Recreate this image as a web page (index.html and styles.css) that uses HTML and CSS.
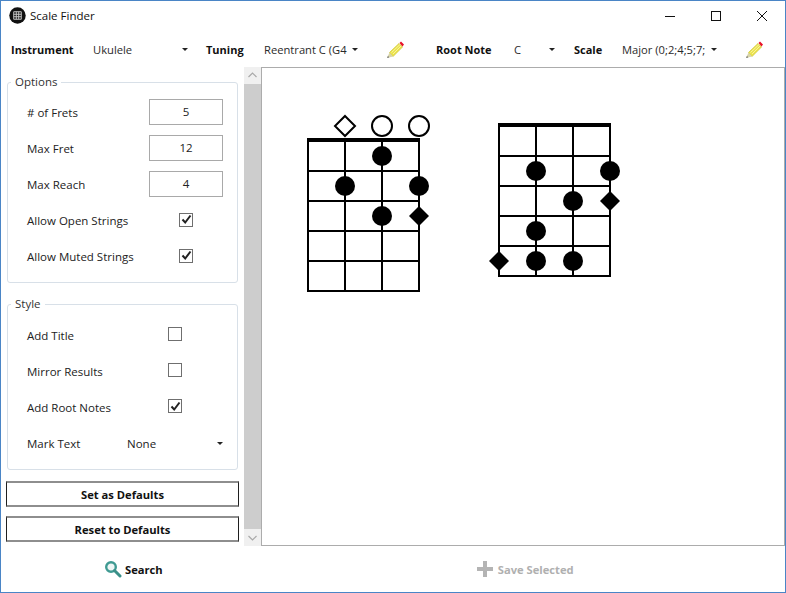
FILE: index.html
```html
<!DOCTYPE html>
<html>
<head>
<meta charset="utf-8">
<title>Scale Finder</title>
<link rel="stylesheet" href="styles.css">
</head>
<body>
<div class="window">
  <header class="titlebar">
    <svg class="appicon" width="17" height="17" viewBox="0 0 18 18">
      <circle cx="9" cy="9" r="8.700" fill="#111"/>
      <path d="M5 5h8v8H5zM5 7.700h8M5 10.300h8M7.700 5v8M10.300 5v8" fill="none" stroke="#ccc" stroke-width="1"/>
    </svg>
    <span class="apptitle">Scale Finder</span>
    <div class="winbtns">
      <svg class="winbtn" width="46" height="30" viewBox="0 0 46 30"><path d="M18 15.500h10" stroke="#111"/></svg>
      <svg class="winbtn" width="46" height="30" viewBox="0 0 46 30"><rect x="18.500" y="10.500" width="9" height="9" fill="none" stroke="#111"/></svg>
      <svg class="winbtn" width="46" height="30" viewBox="0 0 46 30"><path d="M18 10l10 10M28 10L18 20" stroke="#111" fill="none"/></svg>
    </div>
  </header>
  <div class="toolbar">
    <b class="tlabel l-inst">Instrument</b>
    <div class="combo c-inst"><span class="val">Ukulele</span><i class="caret"></i></div>
    <b class="tlabel l-tun">Tuning</b>
    <div class="combo c-tun"><span class="val">Reentrant C (G4</span><i class="caret"></i></div>
    <svg class="pencil p1" width="20" height="20" viewBox="0 0 20 20"><use href="#pencil"/></svg>
    <b class="tlabel l-root">Root Note</b>
    <div class="combo c-root"><span class="val">C</span><i class="caret"></i></div>
    <b class="tlabel l-scale">Scale</b>
    <div class="combo c-scale"><span class="val">Major (0;2;4;5;7;</span><i class="caret"></i></div>
    <svg class="pencil p2" width="20" height="20" viewBox="0 0 20 20"><use href="#pencil"/></svg>
  </div>
  <main class="main">
    <aside class="side">
      <fieldset class="group g-options">
        <legend>Options</legend>
        <div class="row"><span># of Frets</span><div class="num">5</div></div>
        <div class="row"><span>Max Fret</span><div class="num">12</div></div>
        <div class="row"><span>Max Reach</span><div class="num">4</div></div>
        <div class="row"><span>Allow Open Strings</span><div class="check on"><svg width="11" height="11" viewBox="0 0 11 11"><path d="M1.500 5.500l2.700 3L9.500 1.500" fill="none" stroke="#222" stroke-width="2"/></svg></div></div>
        <div class="row"><span>Allow Muted Strings</span><div class="check on"><svg width="11" height="11" viewBox="0 0 11 11"><path d="M1.500 5.500l2.700 3L9.500 1.500" fill="none" stroke="#222" stroke-width="2"/></svg></div></div>
      </fieldset>
      <fieldset class="group g-style">
        <legend>Style</legend>
        <div class="row"><span>Add Title</span><div class="check"></div></div>
        <div class="row"><span>Mirror Results</span><div class="check"></div></div>
        <div class="row"><span>Add Root Notes</span><div class="check on"><svg width="11" height="11" viewBox="0 0 11 11"><path d="M1.500 5.500l2.700 3L9.500 1.500" fill="none" stroke="#222" stroke-width="2"/></svg></div></div>
        <div class="row"><span class="mt">Mark Text</span><span class="mv">None</span><i class="caret"></i></div>
      </fieldset>
      <button class="btn b1">Set as Defaults</button>
      <button class="btn b2">Reset to Defaults</button>
    </aside>
    <div class="scrollbar">
      <svg class="arrow" width="17" height="17" viewBox="0 0 17 17"><path d="M4.500 10l4-4 4 4" fill="none" stroke="#a8a8a8" stroke-width="1.200"/></svg>
      <div class="thumb"></div>
      <svg class="arrow" width="17" height="17" viewBox="0 0 17 17"><path d="M4.500 7l4 4 4-4" fill="none" stroke="#a8a8a8" stroke-width="1.200"/></svg>
    </div>
    <section class="canvas">
      <svg class="diagrams" width="523" height="477" viewBox="262 68 523 477">
        <g fill="none" stroke="#000" stroke-width="2">
          <path d="M308 140V292M345 140V292M382 140V292M419 140V292M307 171H420M307 201H420M307 231H420M307 261H420M307 291H420"/>
          <path d="M307 140H420" stroke-width="4"/>
          <path d="M499 125V277M536 125V277M573 125V277M610 125V277M498 156H611M498 186H611M498 216H611M498 246H611M498 276H611"/>
          <path d="M498 125H611" stroke-width="4"/>
          <path d="M345 116l10 10-10 10-10-10z"/>
          <circle cx="382" cy="126" r="10"/>
          <circle cx="419" cy="126" r="10"/>
        </g>
        <g fill="#000">
          <circle cx="382" cy="156" r="10"/>
          <circle cx="345" cy="186" r="10"/>
          <circle cx="419" cy="186" r="10"/>
          <circle cx="382" cy="216" r="10"/>
          <path d="M419 206l10 10-10 10-10-10z"/>
          <circle cx="536" cy="171" r="10"/>
          <circle cx="610" cy="171" r="10"/>
          <circle cx="573" cy="201" r="10"/>
          <path d="M610 191l10 10-10 10-10-10z"/>
          <circle cx="536" cy="231" r="10"/>
          <circle cx="536" cy="261" r="10"/>
          <circle cx="573" cy="261" r="10"/>
          <path d="M499 251l10 10-10 10-10-10z"/>
        </g>
      </svg>
    </section>
  </main>
  <footer class="footer">
    <div class="action a-search">
      <svg width="18" height="18" viewBox="0 0 18 18"><circle cx="7" cy="7" r="4.800" fill="#eef6f5" stroke="#3f9a92" stroke-width="2.400"/><path d="M10.500 10.500l5.500 5.500" stroke="#3a8f88" stroke-width="3" stroke-linecap="round"/></svg>
      <b>Search</b>
    </div>
    <div class="action a-save">
      <svg width="16" height="16" viewBox="0 0 16 16"><path d="M6 0h4v6h6v4h-6v6H6v-6H0V6h6z" fill="#b4b4b4"/></svg>
      <b>Save Selected</b>
    </div>
  </footer>
</div>
<svg class="defs" width="0" height="0">
  <defs>
    <symbol id="pencil" viewBox="0 0 20 20">
      <path d="M4.500 12.500L14 3.500l3.500 3.500-9.500 9.500z" fill="#ece34a" stroke="#cfc83a" stroke-width=".8"/>
      <path d="M6.500 12.500l8.500-8M8 14l8-8" stroke="#f7f2a0" stroke-width="1"/>
      <path d="M14.500 3l1.500-1.500 3 3-1.500 2z" fill="#e8132a"/>
      <path d="M4.500 12.500L2 18l6-1.500z" fill="#d9d5a8"/>
      <path d="M3 15.800L2 18l2.300-.6z" fill="#777"/>
    </symbol>
  </defs>
</svg>
</body>
</html>
```
FILE: styles.css
```css
* { box-sizing: border-box; }
html, body { margin: 0; padding: 0; }
body {
  width: 786px;
  height: 593px;
  overflow: hidden;
  background: #fff;
  font-family: "Open Sans", "Noto Sans", sans-serif;
  font-size: 11.500px;
  color: #222;
}
.defs { position: absolute; }
.window {
  width: 786px;
  height: 593px;
  border: 1px solid #4a85c6;
  display: flex;
  flex-direction: column;
}
.titlebar {
  height: 30px;
  display: flex;
  align-items: center;
  padding-left: 8px;
  flex: none;
}
.appicon { margin-top: -2px; }
.apptitle { margin-left: 4px; margin-top: -1px; font-size: 11.500px; color: #111; }
.winbtns { margin-left: auto; display: flex; margin-right: 0; }
.winbtn { display: block; }
.toolbar {
  height: 36px;
  flex: none;
  display: flex;
  align-items: center;
  padding-top: 1px;
}
.tlabel { font-size: 11px; font-weight: 700; color: #111; }
.combo { display: flex; align-items: center; color: #2a2a2a; font-size: 11.200px; white-space: nowrap; }
.val { flex: 1; overflow: hidden; }
.caret {
  display: block;
  width: 0;
  height: 0;
  border-left: 3px solid transparent;
  border-right: 3px solid transparent;
  border-top: 3px solid #222;
  flex: none;
}
.l-inst { margin-left: 10px; width: 82px; }
.c-inst { width: 95px; }
.l-tun { margin-left: 18px; width: 58px; }
.c-tun { width: 94px; }
.p1 { margin-left: 27px; }
.l-root { margin-left: 31px; width: 78px; }
.c-root { width: 41px; }
.l-scale { margin-left: 19px; width: 48px; }
.c-scale { width: 95px; }
.p2 { margin-left: 27px; }
.main {
  flex: 1;
  min-height: 0;
  display: flex;
  padding-left: 5px;
}
.side {
  width: 233px;
  flex: none;
  display: flex;
  flex-direction: column;
}
.group {
  margin: 0 1px;
  padding: 0 0 0 19px;
  border: 1px solid #d8e0e8;
  border-radius: 3px;
  min-width: 0;
}
.group legend {
  padding: 0 4px;
  font-size: 11.500px;
  line-height: 16px;
  color: #333;
}
.g-options { height: 209px; margin-top: 7px; }
.g-style { height: 174px; margin-top: 13px; }
.g-options legend, .g-style legend { margin-left: -16px; }
.row { height: 36px; display: flex; align-items: center; position: relative; }
.g-options .row:first-of-type { margin-top: 4px; }
.g-style .row:first-of-type { margin-top: 5px; }
.row > span:first-child { width: 122px; flex: none; white-space: pre; }
.num {
  width: 74px;
  height: 26px;
  border: 1px solid #a9a9a9;
  text-align: center;
  line-height: 24px;
  font-size: 11.500px;
  color: #222;
}
.check {
  width: 14px;
  height: 14px;
  border: 1px solid #6f6f6f;
  margin-left: 30px;
  margin-top: -1px;
  display: flex;
  align-items: center;
  justify-content: center;
}
.g-style .check { margin-left: 19px; margin-top: -2px; }
.g-style .mt { width: 100px !important; }
.mv { width: 90px; }
.btn {
  display: block;
  height: 26px;
  width: 233px;
  padding: 0;
  background: #fff;
  border: 1px solid #1f1f1f;
  border-top: 2px solid #8e8e8e;
  border-bottom: 2px solid #8e8e8e;
  font-family: inherit;
  font-size: 11.200px;
  font-weight: 700;
  color: #111;
}
.b1 { margin-top: 11px; }
.b2 { margin-top: 9px; }
.scrollbar {
  width: 17px;
  flex: none;
  margin-left: 5px;
  background: #f0f0f0;
  display: flex;
  flex-direction: column;
}
.arrow { display: block; flex: none; }
.thumb { flex: 1; background: #cdcdcd; }
.canvas {
  width: 524px;
  flex: none;
  border: 1px solid #acacac;
  background: #fff;
  overflow: hidden;
}
.diagrams { display: block; }
.footer {
  height: 46px;
  flex: none;
  display: flex;
}
.action { display: flex; align-items: center; gap: 5px; font-size: 11.200px; }
.action b { font-weight: 700; }
.a-search { margin-left: 103px; color: #111; gap: 3px; }
.a-save { margin-left: 314px; color: #b0b0b0; }
```
